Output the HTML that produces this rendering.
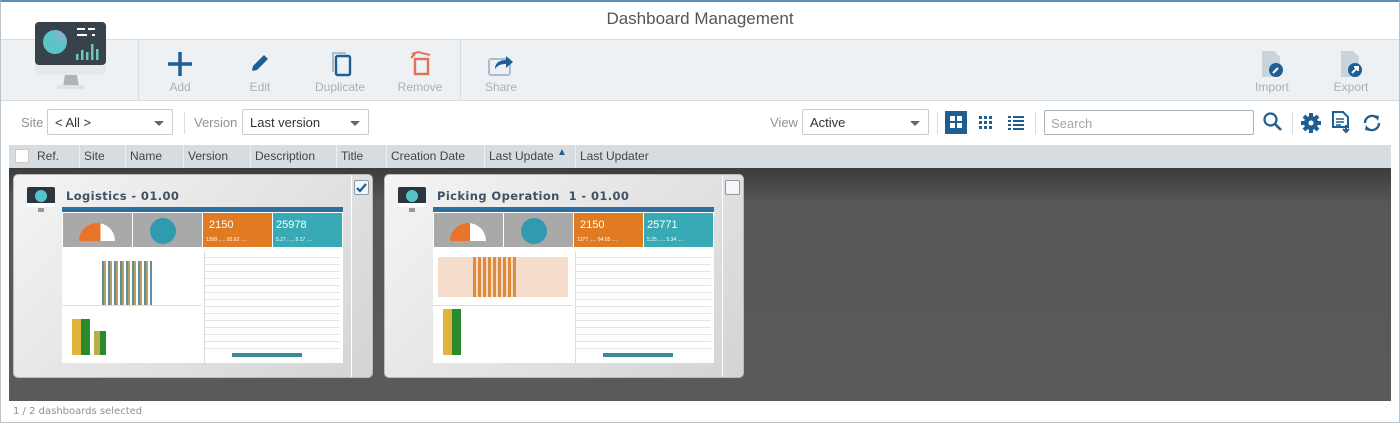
<!DOCTYPE html>
<html><head><meta charset="utf-8"><style>
*{box-sizing:border-box;margin:0;padding:0}
body{width:1400px;height:423px;overflow:hidden;font-family:"Liberation Sans",sans-serif;background:#fff;position:relative}
.abs{position:absolute}
.frame{left:0;top:0;width:1400px;height:423px;border:1px solid #b9c3cb;border-top:2px solid #5b8fb5}
.title{left:0;top:9px;width:1400px;text-align:center;font-size:17px;color:#555}
.tb{left:1px;top:39px;width:1398px;height:62px;background:#edf1f4;border-top:1px solid #d6dde2;border-bottom:1px solid #d6dde2}
.btn{top:80px;width:80px;text-align:center;font-size:12px;color:#a8b0b6}
.sep{width:1px;background:#d6dde2}
.lbl{font-size:13px;color:#8a9298;top:115px}
.sel{top:109px;height:26px;border:1px solid #c8cdd1;border-radius:2px;font-size:13px;color:#333;padding:5px 7px;background:#fff}
.sel:after{content:"";position:absolute;right:8px;top:11px;border:5px solid transparent;border-top:5px solid #666}
.hdr{left:9px;top:145px;width:1382px;height:23px;background:#d6dce0;font-size:12px;color:#444}
.hdr span{position:absolute;top:4px}
.hdr i{position:absolute;top:0;width:1px;height:23px;background:#eef1f3}
.dark{left:9px;top:168px;width:1382px;height:233px;background:linear-gradient(#3c3c3c,#575757 15%,#5a5a5a)}
.card{top:174px;width:360px;height:204px;border-radius:5px;background:linear-gradient(135deg,#f4f4f4,#d4d4d4);border:1px solid #bbb}
.card .strip{position:absolute;right:0;top:0;width:21px;height:100%;border-left:1px solid #fff}
.card .cb{position:absolute;right:3px;top:5px;width:15px;height:15px;border:1px solid #8a9aa8;background:#f4f6f8;border-radius:2px}
.ct{position:absolute;left:52px;top:14px;font-size:11.5px;font-weight:bold;color:#3d5266;letter-spacing:.4px;font-family:"DejaVu Sans",sans-serif}
.shot{position:absolute;left:48px;top:32px;width:281px;height:156px;background:#fff;overflow:hidden}
.shot div{position:absolute}
.rows{background:repeating-linear-gradient(#fff 0 6px,#e4e4e4 6px 7px)}
.foot{left:13px;top:406px;font-size:10px;color:#8a9298;font-family:"DejaVu Sans",sans-serif}
</style></head><body>
<div class="abs frame"></div>
<div class="abs title">Dashboard Management</div>
<div class="abs tb"></div>
<svg class="abs" style="left:33px;top:21px" width="76" height="70" viewBox="0 0 76 70">
<rect x="2" y="1" width="71" height="53" rx="4" fill="#e6e9eb"/>
<rect x="2" y="1" width="71" height="43" rx="4" fill="#37424b"/>
<path d="M30 65h16l-2-11h-12z" fill="#aeb3b7"/><rect x="24" y="64" width="28" height="4" rx="2" fill="#dfe2e4"/>
<circle cx="22" cy="21" r="12" fill="#5cc3c9"/><path d="M22 21V9a12 12 0 0 1 12 12z" fill="#7fb4cf"/>
<rect x="44" y="7" width="8" height="2" fill="#fff"/><rect x="55" y="7" width="7" height="2" fill="#fff"/><rect x="44" y="13" width="10" height="2" fill="#fff"/><rect x="59" y="13" width="3" height="2" fill="#fff"/>
<g fill="#6cc9bf"><rect x="43" y="33" width="2.5" height="6"/><rect x="48" y="29" width="2.5" height="10"/><rect x="53" y="31" width="2.5" height="8"/><rect x="58" y="23" width="2.5" height="16"/><rect x="63" y="28" width="2.5" height="11"/></g>
</svg>
<div class="abs sep" style="left:138px;top:40px;height:60px"></div>
<div class="abs sep" style="left:460px;top:40px;height:60px"></div>
<svg class="abs" style="left:167px;top:51px" width="26" height="26"><path d="M13 1v24M1 13h24" stroke="#1f5e92" stroke-width="3.5"/></svg>
<svg class="abs" style="left:249px;top:52px" width="22" height="22"><path d="M3 19l1-5 11-11 4 4-11 11z" fill="#1f5e92"/></svg>
<svg class="abs" style="left:329px;top:50px" width="24" height="28"><path d="M4 22V3h13" stroke="#a9bdd0" stroke-width="2" fill="none"/><rect x="7" y="6" width="14" height="19" rx="1.5" stroke="#1f5e92" stroke-width="2.4" fill="none"/></svg>
<svg class="abs" style="left:408px;top:50px" width="26" height="28"><path d="M4 4l6-2 12 3" stroke="#e2715a" stroke-width="2" fill="none"/><rect x="7" y="9" width="13" height="15" stroke="#e2715a" stroke-width="2.4" fill="none"/><path d="M3 8l4-4" stroke="#e2715a" stroke-width="2"/></svg>
<svg class="abs" style="left:487px;top:50px" width="28" height="28"><rect x="2" y="9" width="21" height="16" rx="2" stroke="#a9bdd0" stroke-width="2" fill="none"/><path d="M8 19c0-7 6-9 11-9V6l7 6-7 6v-4c-5 0-8 1-11 5z" fill="#1f5e92"/></svg>
<div class="abs btn" style="left:140px">Add</div><div class="abs btn" style="left:220px">Edit</div><div class="abs btn" style="left:300px">Duplicate</div><div class="abs btn" style="left:380px">Remove</div><div class="abs btn" style="left:461px">Share</div>
<div class="abs btn" style="left:1232px">Import</div><div class="abs btn" style="left:1311px">Export</div>
<svg class="abs" style="left:1259px;top:49px" width="28" height="30"><path d="M3 2h12l6 6v20H3z" fill="#c7d3dd"/><circle cx="17" cy="21" r="7" fill="#1f5e92"/><path d="M14 24l5-5" stroke="#fff" stroke-width="2"/></svg>
<svg class="abs" style="left:1338px;top:49px" width="28" height="30"><path d="M3 2h12l6 6v20H3z" fill="#c7d3dd"/><circle cx="17" cy="21" r="7" fill="#1f5e92"/><path d="M14 24l5-5M16 18h4v4" stroke="#fff" stroke-width="2" fill="none"/></svg>
<div class="abs lbl" style="left:21px">Site</div>
<div class="abs sel" style="left:47px;width:126px">&lt; All &gt;</div>
<div class="abs sep" style="left:184px;top:112px;height:22px"></div>
<div class="abs lbl" style="left:194px">Version</div>
<div class="abs sel" style="left:242px;width:127px">Last version</div>
<div class="abs lbl" style="left:770px">View</div>
<div class="abs sel" style="left:802px;width:127px">Active</div>
<div class="abs sep" style="left:937px;top:112px;height:22px"></div>
<div class="abs" style="left:945px;top:111px;width:22px;height:23px;background:#1f5e92"></div>
<svg class="abs" style="left:945px;top:111px" width="22" height="23"><g fill="#fff"><rect x="5" y="5" width="5" height="5"/><rect x="12" y="5" width="5" height="5"/><rect x="5" y="12" width="5" height="5"/><rect x="12" y="12" width="5" height="5"/></g></svg>
<svg class="abs" style="left:978px;top:115px" width="16" height="16"><g fill="#1f5e92"><rect x="1" y="1" width="3" height="3"/><rect x="6" y="1" width="3" height="3"/><rect x="11" y="1" width="3" height="3"/><rect x="1" y="6" width="3" height="3"/><rect x="6" y="6" width="3" height="3"/><rect x="11" y="6" width="3" height="3"/><rect x="1" y="11" width="3" height="3"/><rect x="6" y="11" width="3" height="3"/><rect x="11" y="11" width="3" height="3"/></g></svg>
<svg class="abs" style="left:1007px;top:115px" width="18" height="16"><g fill="#1f5e92"><rect x="1" y="1" width="3" height="2"/><rect x="6" y="1" width="11" height="2"/><rect x="1" y="5" width="3" height="2"/><rect x="6" y="5" width="11" height="2"/><rect x="1" y="9" width="3" height="2"/><rect x="6" y="9" width="11" height="2"/><rect x="1" y="13" width="3" height="2"/><rect x="6" y="13" width="11" height="2"/></g></svg>
<div class="abs sep" style="left:1035px;top:112px;height:22px"></div>
<div class="abs" style="left:1044px;top:110px;width:210px;height:25px;border:1px solid #aab2b8;border-radius:2px;font-size:13px;color:#a0a6ab;padding:5px 6px">Search</div>
<svg class="abs" style="left:1262px;top:111px" width="22" height="22"><circle cx="8.5" cy="8.5" r="6" stroke="#1f5e92" stroke-width="2.2" fill="none"/><path d="M13 13l6 6" stroke="#1f5e92" stroke-width="2.6"/></svg>
<div class="abs sep" style="left:1292px;top:112px;height:22px"></div>
<svg class="abs" style="left:1300px;top:112px" width="22" height="22"><g stroke="#1f5e92" stroke-width="4"><path d="M11 1v20M1 11h20M4 4l14 14M18 4L4 18"/></g><circle cx="11" cy="11" r="7" fill="#1f5e92"/><circle cx="11" cy="11" r="2.5" fill="#fff"/></svg>
<svg class="abs" style="left:1331px;top:111px" width="20" height="23"><path d="M2 1h10l5 5v10H2z" fill="none" stroke="#1f5e92" stroke-width="2"/><path d="M5 8h8M5 11h8M5 14h5" stroke="#1f5e92" stroke-width="1.5"/><path d="M15 14v7M12 18l3 3 3-3" stroke="#1f5e92" stroke-width="2" fill="none"/></svg>
<svg class="abs" style="left:1361px;top:112px" width="22" height="22"><path d="M4 11a7 7 0 0 1 12-5M18 11a7 7 0 0 1-12 5" stroke="#1f5e92" stroke-width="2.4" fill="none"/><path d="M13 3l5 1-1 5zM9 19l-5-1 1-5z" fill="#1f5e92"/></svg>
<div class="abs hdr">
<div style="position:absolute;left:6px;top:4px;width:14px;height:14px;background:#fff;border:1px solid #ccc"></div>
<span style="left:28px">Ref.</span><i style="left:70px"></i><span style="left:75px">Site</span><i style="left:116px"></i><span style="left:121px">Name</span><i style="left:174px"></i><span style="left:179px">Version</span><i style="left:241px"></i><span style="left:246px">Description</span><i style="left:327px"></i><span style="left:332px">Title</span><i style="left:377px"></i><span style="left:382px">Creation Date</span><i style="left:475px"></i><span style="left:480px">Last Update</span><span style="left:548px;top:2px;color:#1f5e92;font-size:10px">▲</span><i style="left:566px"></i><span style="left:571px">Last Updater</span>
</div>
<div class="abs dark"></div>

<div class="abs card" style="left:13px"><div class="strip"><div class="cb"><svg width="13" height="13"><path d="M2 7l3 3 6-7" stroke="#1f5e92" stroke-width="2.2" fill="none"/></svg></div></div>
<svg style="position:absolute;left:12px;top:11px" width="30" height="28"><rect x="1" y="1" width="28" height="17" rx="2" fill="#2c3640"/><circle cx="15" cy="10" r="6" fill="#58c2c9"/><rect x="1" y="17" width="28" height="4" fill="#fff"/><rect x="12" y="22" width="6" height="4" fill="#999"/></svg>
<div class="ct">Logistics - 01.00</div>
<div class="shot"><div style="left:0;top:0;width:281px;height:5px;background:#2f6f9f"></div>
<div style="left:1px;top:6px;width:69px;height:34px;background:#a9a9a9"></div><div style="left:71px;top:6px;width:69px;height:34px;background:#a9a9a9"></div><div style="left:141px;top:6px;width:69px;height:34px;background:#e07b23"></div><div style="left:211px;top:6px;width:69px;height:34px;background:#38aab5"></div>
<div style="left:17px;top:16px;width:36px;height:18px;border-radius:18px 18px 0 0;background:linear-gradient(90deg,#e8732a 60%,#fff 60%)"></div>
<div style="left:88px;top:11px;width:26px;height:26px;border-radius:50%;background:#2f9ab0"></div>
<div style="left:147px;top:12px;color:#fff;font-size:11px">2150</div><div style="left:214px;top:12px;color:#fff;font-size:11px">25978</div>
<div style="left:144px;top:30px;color:#fff;font-size:5px">1398 ..... 92.62 ....</div><div style="left:214px;top:30px;color:#fff;font-size:5px">5.27 ..... 5.17 ....</div>
<div style="left:40px;top:54px;width:50px;height:44px;background:repeating-linear-gradient(90deg,#5f8f9a 0 2px,#b99e63 2px 4px,transparent 4px 6px)"></div>
<div style="left:0;top:98px;width:140px;height:1px;background:#ddd"></div>
<div style="left:143px;top:44px;width:135px;height:100px" class="rows"></div>
<div style="left:142px;top:44px;width:1px;height:112px;background:#ddd"></div>
<div style="left:10px;top:112px;width:18px;height:36px;background:linear-gradient(90deg,#e2b43c 50%,#2b8a2b 50%)"></div>
<div style="left:32px;top:124px;width:12px;height:24px;background:linear-gradient(90deg,#b5b04a 50%,#2b8a2b 50%)"></div>
<div style="left:170px;top:146px;width:70px;height:4px;background:#3a8a9f"></div>
</div></div>
<div class="abs card" style="left:384px;width:360px"><div class="strip"><div class="cb"></div></div>
<svg style="position:absolute;left:12px;top:11px" width="30" height="28"><rect x="1" y="1" width="28" height="17" rx="2" fill="#2c3640"/><circle cx="15" cy="10" r="6" fill="#58c2c9"/><rect x="1" y="17" width="28" height="4" fill="#fff"/><rect x="12" y="22" width="6" height="4" fill="#999"/></svg>
<div class="ct">Picking Operation&nbsp; 1 - 01.00</div>
<div class="shot"><div style="left:0;top:0;width:281px;height:5px;background:#2f6f9f"></div>
<div style="left:1px;top:6px;width:69px;height:34px;background:#a9a9a9"></div><div style="left:71px;top:6px;width:69px;height:34px;background:#a9a9a9"></div><div style="left:141px;top:6px;width:69px;height:34px;background:#e07b23"></div><div style="left:211px;top:6px;width:69px;height:34px;background:#38aab5"></div>
<div style="left:17px;top:16px;width:36px;height:18px;border-radius:18px 18px 0 0;background:linear-gradient(90deg,#e8732a 55%,#fff 55%)"></div>
<div style="left:88px;top:11px;width:26px;height:26px;border-radius:50%;background:#2f9ab0"></div>
<div style="left:147px;top:12px;color:#fff;font-size:11px">2150</div><div style="left:214px;top:12px;color:#fff;font-size:11px">25771</div>
<div style="left:144px;top:30px;color:#fff;font-size:5px">1377 ..... 64.05 ....</div><div style="left:214px;top:30px;color:#fff;font-size:5px">5.25 ..... 5.34 ....</div>
<div style="left:5px;top:50px;width:130px;height:40px;background:#f6dccb"></div>
<div style="left:40px;top:50px;width:45px;height:40px;background:repeating-linear-gradient(90deg,#e08a3a 0 3px,transparent 3px 5px)"></div>
<div style="left:0;top:98px;width:140px;height:1px;background:#ddd"></div>
<div style="left:143px;top:44px;width:135px;height:100px" class="rows"></div>
<div style="left:142px;top:44px;width:1px;height:112px;background:#ddd"></div>
<div style="left:10px;top:102px;width:18px;height:46px;background:linear-gradient(90deg,#e2b43c 50%,#2b8a2b 50%)"></div>
<div style="left:170px;top:146px;width:70px;height:4px;background:#3a8a9f"></div>
</div></div>
<div class="abs foot">1 / 2 dashboards selected</div>
</body></html>
